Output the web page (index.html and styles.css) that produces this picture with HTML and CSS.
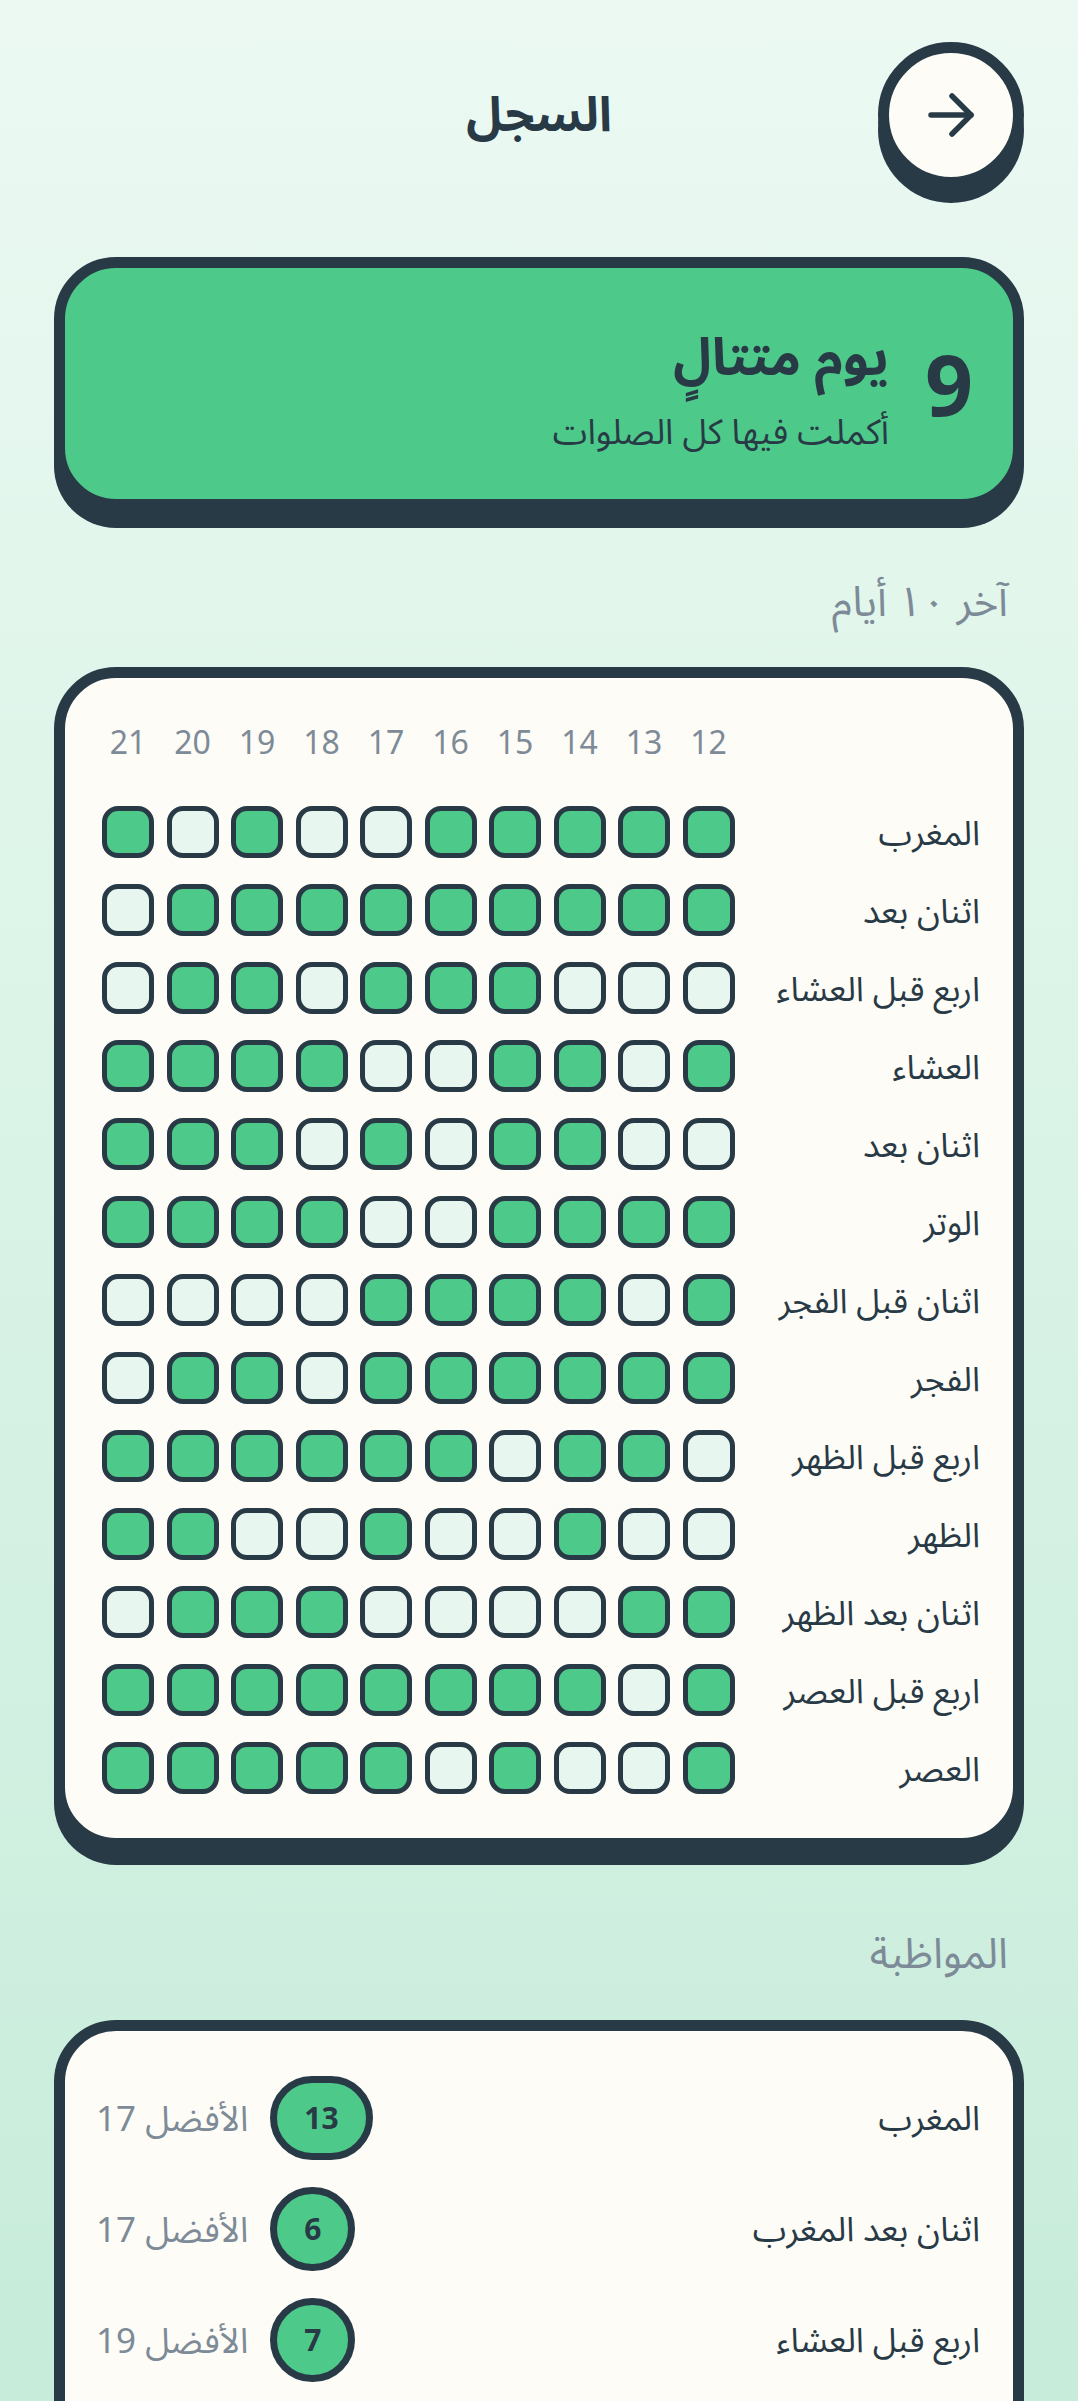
FILE: index.html
```html
<!DOCTYPE html>
<html lang="ar" dir="rtl">
<head>
  <meta charset="UTF-8">
  <meta name="viewport" content="width=device-width, initial-scale=1.0">
  <title>السجل</title>
  <link rel="stylesheet" href="styles.css">
</head>
<body>
<div class="page">
  <div class="header">
    <button class="back-btn" aria-label="رجوع">
      <svg width="60" height="60" viewBox="0 0 60 60" fill="none" stroke="#293a47" stroke-width="5.5" stroke-linecap="round" stroke-linejoin="round">
        <path d="M10 30 H50"/>
        <path d="M31 11 L50 30 L31 49"/>
      </svg>
    </button>
    <h1>السجل</h1>
    <div></div>
  </div>

  <div class="streak-card">
    <div class="streak-num">9</div>
    <div class="streak-text">
      <div class="streak-title">يوم متتالٍ</div>
      <div class="streak-sub">أكملت فيها كل الصلوات</div>
    </div>
  </div>

  <h2 class="section-title">آخر ١٠ أيام</h2>
  <div class="card grid-card">
    <div class="grid" id="grid"></div>
  </div>

  <h2 class="section-title second">المواظبة</h2>
  <div class="card streaks-card" id="streaks"></div>
</div>

<script>
  // كل سطر مكتوب كما يظهر من اليسار (21) الى اليمين (12)
  const rows = [
    ["المغرب", "1010011111"],
    ["اثنان بعد", "0111111111"],
    ["اربع قبل العشاء", "0110111000"],
    ["العشاء", "1111001101"],
    ["اثنان بعد", "1110101100"],
    ["الوتر", "1111001111"],
    ["اثنان قبل الفجر", "0000111101"],
    ["الفجر", "0110111111"],
    ["اربع قبل الظهر", "1111110110"],
    ["الظهر", "1100100100"],
    ["اثنان بعد الظهر", "0111000011"],
    ["اربع قبل العصر", "1111111101"],
    ["العصر", "1111101001"]
  ];
  const days = [12, 13, 14, 15, 16, 17, 18, 19, 20, 21];

  const streaks = [
    ["المغرب", 13, 17],
    ["اثنان بعد المغرب", 6, 17],
    ["اربع قبل العشاء", 7, 19],
    ["العشاء", 9, 21],
    ["اثنان بعد العشاء", 4, 12]
  ];

  function buildGrid() {
    const grid = document.getElementById('grid');
    let html = '<div></div>';
    days.forEach(d => {
      html += `<div class="day">${d}</div>`;
    });
    rows.forEach(([name, marks]) => {
      html += `<div class="row-label">${name}</div>`;
      marks.split('').reverse().forEach(m => {
        html += `<div class="cell${m === '1' ? ' done' : ''}"></div>`;
      });
    });
    grid.innerHTML = html;
  }

  function buildStreaks() {
    const box = document.getElementById('streaks');
    box.innerHTML = streaks.map(([name, now, best]) => `
      <div class="streak-row">
        <div class="streak-name">${name}</div>
        <div class="badge">${now}</div>
        <div class="best">الأفضل ${best}</div>
      </div>`).join('');
  }

  buildGrid();
  buildStreaks();
</script>
</body>
</html>
```

FILE: styles.css
```css
html {
  background: linear-gradient(180deg, #ebf9f2 0%, #d9f3e6 50%, #c7ecda 100%) fixed;
}
body {
  margin: 0;
  font-family: 'Noto Sans', 'Noto Sans Arabic', 'Noto Kufi Arabic', 'DejaVu Sans', sans-serif;
  color: #293a47;
}
.page {
  padding: 42px 54px 0;
}
.header {
  display: grid;
  grid-template-columns: 146px 1fr 146px;
  align-items: center;
}
.header h1 {
  margin: 0;
  text-align: center;
  font-size: 48px;
  font-weight: 700;
}
.back-btn {
  width: 146px;
  height: 146px;
  box-sizing: border-box;
  border: 11px solid #293a47;
  border-radius: 50%;
  background: #fdfcf6;
  box-shadow: 0 15px 0 #293a47;
  display: flex;
  align-items: center;
  justify-content: center;
  padding: 0;
  cursor: pointer;
}
.streak-card {
  margin-top: 69px;
  height: 253px;
  box-sizing: border-box;
  border: 11px solid #293a47;
  border-radius: 62px;
  background: #4dc98a;
  box-shadow: 0 18px 0 #293a47;
  display: flex;
  align-items: center;
  gap: 36px;
  padding: 0 40px 0 40px;
}
.streak-num {
  font-size: 84px;
  font-weight: 700;
  line-height: 1;
}
.streak-text {
  padding-top: 8px;
}
.streak-title {
  font-size: 52px;
  font-weight: 700;
  line-height: 70px;
}
.streak-sub {
  margin-top: 16px;
  font-size: 35px;
  line-height: 50px;
}
.section-title {
  margin: 60px 0 37px;
  padding-right: 16px;
  font-size: 42px;
  font-weight: 400;
  line-height: 60px;
  color: #7d8a97;
}
.section-title.second {
  margin: 73px 0 38px;
}
.card {
  box-sizing: border-box;
  border: 11px solid #293a47;
  border-radius: 62px;
  background: #fdfcf6;
  box-shadow: 0 16px 0 #293a47;
}
.grid-card {
  padding: 26px 33px 44px 37px;
}
.grid {
  display: grid;
  grid-template-columns: 1fr repeat(10, 52px);
  grid-auto-rows: 52px;
  grid-template-rows: 76px;
  column-gap: 12.5px;
  row-gap: 26px;
  align-items: center;
}
.day {
  height: 76px;
  line-height: 76px;
  text-align: center;
  font-size: 32px;
  color: #7d8a97;
}
.row-label {
  font-size: 34px;
  line-height: 52px;
  height: 52px;
  white-space: nowrap;
  margin-left: 10px;
}
.cell {
  width: 52px;
  height: 52px;
  box-sizing: border-box;
  border: 5.5px solid #293a47;
  border-radius: 16px;
  background: #e7f6ee;
}
.cell.done {
  background: #4dc98a;
}
.streaks-card {
  padding: 45px 33px 40px 31px;
  display: flex;
  flex-direction: column;
  gap: 28px;
}
.streak-row {
  display: flex;
  align-items: center;
  gap: 22px;
  height: 83px;
}
.streak-name {
  flex: 1;
  font-size: 34px;
  line-height: 83px;
}
.badge {
  min-width: 84px;
  height: 84px;
  box-sizing: border-box;
  padding: 0 27px;
  border: 7px solid #293a47;
  border-radius: 42px;
  background: #4dc98a;
  display: flex;
  align-items: center;
  justify-content: center;
  font-size: 30px;
  font-weight: 700;
}
.best {
  font-size: 35px;
  line-height: 83px;
  color: #7d8a97;
}
```
